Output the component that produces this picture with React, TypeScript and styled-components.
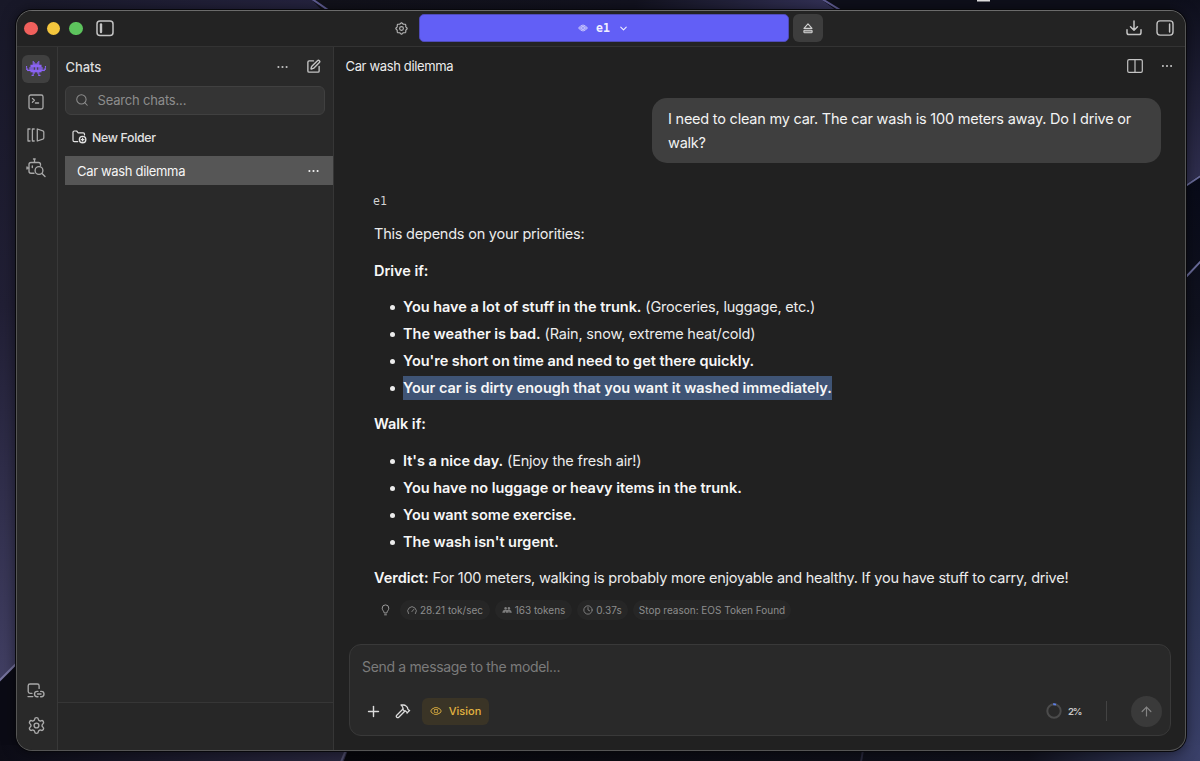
import React from "react";
import styled, { createGlobalStyle, css } from "styled-components";
import { SquarePen, Search, Hammer, Plus, ArrowUp, ChevronDown, Clock, Settings } from "lucide-react";
import { PiEye } from "react-icons/pi";

const Global = createGlobalStyle`
  *, *::before, *::after { box-sizing: border-box; }
  body { margin: 0; background: #0d0d18; overflow: hidden; }
  button { font: inherit; color: inherit; letter-spacing: inherit; border: 0; background: none; padding: 0; }
  svg { display: block; flex: none; }
`;

const Desktop = styled.div`
  position: relative;
  width: 1200px;
  height: 761px;
  padding: 10px 14px 10px 16px;
  overflow: hidden;
  font-family: Inter, "Liberation Sans", sans-serif;
  color: #ececec;
`;

const WallpaperSvg = styled.svg`
  position: absolute;
  inset: 0;
`;

const AppWindow = styled.div`
  position: relative;
  display: flex;
  flex-direction: column;
  width: 1170px;
  height: 741px;
  border: 1px solid #555555;
  border-top-color: #6b6b6b;
  border-radius: 16px;
  overflow: hidden;
  background: #212121;
  box-shadow: 0 0 0 1px #08080c, 0 1px 14px rgba(0, 0, 0, 0.55);
`;

const TitleBar = styled.header`
  display: flex;
  align-items: center;
  flex: none;
  height: 36px;
  padding: 0 11px 1px 7px;
  background: #232323;
  border-bottom: 1px solid #333333;
`;

const Lights = styled.div`
  display: flex;
  gap: 9px;
  margin-top: 1px;
`;

const Light = styled.span<{ $color: string }>`
  width: 13.5px;
  height: 13.5px;
  border-radius: 50%;
  background: ${(p) => p.$color};
`;

const IconButton = styled.button<{ $color?: string }>`
  display: flex;
  align-items: center;
  justify-content: center;
  color: ${(p) => p.$color ?? "#c4c4c4"};
`;

const PanelToggle = styled(IconButton)`
  margin-left: 13.5px;
`;

const TitleCenter = styled.div`
  display: flex;
  align-items: center;
  margin-left: 281px;
`;

const ModelPicker = styled.button`
  display: flex;
  align-items: center;
  justify-content: center;
  width: 370px;
  height: 28px;
  margin: 0 4px 0 10.5px;
  border: 1px solid #4f4bb8;
  border-radius: 5px;
  background: #625ff6;
  color: #f1f0ff;
  font: 700 11.5px "DejaVu Sans Mono", monospace;
  gap: 8px;
`;

const Eject = styled.button`
  display: flex;
  align-items: center;
  justify-content: center;
  width: 30.5px;
  height: 28px;
  border-radius: 6px;
  background: #3d3d3d;
  color: #d0d0d0;
`;

const TitleEnd = styled.div`
  display: flex;
  align-items: center;
  gap: 14.5px;
  margin-left: auto;
`;

const Body = styled.div`
  display: flex;
  flex: 1;
  min-height: 0;
`;

const Rail = styled.nav`
  display: flex;
  flex-direction: column;
  align-items: center;
  flex: none;
  width: 41px;
  padding: 7.5px 2px 15px 0;
  background: #292929;
  border-right: 1px solid #383838;
  color: #a9a9a9;
`;

const RailButton = styled.button<{ $active?: boolean }>`
  display: flex;
  align-items: center;
  justify-content: center;
  width: 28px;
  height: 28px;
  margin-bottom: 5.3px;
  border-radius: 6px;
  ${(p) =>
    p.$active &&
    css`
      background: #404040;
      color: #8a63f4;
    `}
`;

const RailEnd = styled.div`
  display: flex;
  flex-direction: column;
  align-items: center;
  gap: 17.5px;
  margin-top: auto;
`;

const Sidebar = styled.aside`
  display: flex;
  flex-direction: column;
  flex: none;
  width: 276px;
  background: #292929;
  border-right: 1px solid #363636;
`;

const SidebarHeader = styled.div`
  display: flex;
  align-items: center;
  height: 39px;
  padding: 0 12px 0 7.5px;
`;

const SidebarTitle = styled.h2`
  flex: 1;
  margin: 0;
  font-size: 13px;
  font-weight: 500;
  letter-spacing: -0.1px;
  color: #dddddd;
`;

const HeaderTools = styled.div`
  display: flex;
  align-items: center;
  gap: 18px;
`;

const SearchBox = styled.div`
  display: flex;
  align-items: center;
  gap: 9px;
  height: 29px;
  margin: 0 8px 0 7px;
  padding: 0 9px 1px 8.5px;
  border: 1px solid #404040;
  border-radius: 6px;
  background: #343434;
  color: #8d8d8d;
  font-size: 13px;
  letter-spacing: -0.18px;
`;

const NewFolder = styled.button`
  display: flex;
  align-items: center;
  gap: 5px;
  height: 41px;
  padding: 3px 0 0 14px;
  font-size: 12.3px;
  font-weight: 500;
  letter-spacing: -0.3px;
  color: #e2e2e2;
`;

const ChatRow = styled.div`
  display: flex;
  align-items: center;
  justify-content: space-between;
  height: 29px;
  margin-left: 7px;
  padding: 0 14px 0 12px;
  background: #565656;
  color: #f5f5f5;
  font-size: 13px;
  letter-spacing: -0.33px;
`;

const SidebarFooter = styled.div`
  height: 48px;
  margin-top: auto;
  border-top: 1px solid #363636;
  background: #272727;
`;

const Main = styled.main`
  display: flex;
  flex-direction: column;
  flex: 1;
  min-width: 0;
`;

const ChatHeader = styled.div`
  display: flex;
  align-items: center;
  justify-content: space-between;
  height: 38px;
  padding: 0 12px 1px 11.5px;
  font-size: 13px;
  letter-spacing: -0.35px;
`;

const Thread = styled.section`
  display: flex;
  flex-direction: column;
  flex: 1;
  padding: 13px 24px 0 39px;
  font-size: 14.5px;
  line-height: 24px;
`;

const UserBubble = styled.div`
  align-self: flex-end;
  width: 509px;
  height: 65px;
  padding: 8.5px 16px;
  border-radius: 15px;
  background: #3f3f3f;
  color: #f3f3f3;
`;

const ModelName = styled.div`
  margin: 30px 0 13.4px;
  font: 11.5px/16px "DejaVu Sans Mono", monospace;
  color: #d2d2d2;
`;

const Answer = styled.div`
  display: flex;
  flex-direction: column;
  gap: 12.3px;
  padding-left: 1px;
`;

const Line = styled.p`
  margin: 0;
  white-space: nowrap;
  letter-spacing: -0.22px;
`;

const Strong = styled.strong`
  font-weight: 600;
  letter-spacing: -0.03px;
  color: #f7f7f7;
`;

const Bullets = styled.ul`
  display: flex;
  flex-direction: column;
  gap: 3px;
  margin: 0;
  padding: 0;
  list-style: none;
`;

const Bullet = styled.li`
  display: flex;
  align-items: center;
  height: 24px;
  padding-left: 16px;
  white-space: nowrap;
  letter-spacing: -0.19px;

  &::before {
    content: "";
    width: 5px;
    height: 5px;
    margin: 1px 8px 0 0;
    border-radius: 50%;
    background: #ececec;
  }
`;

const Selection = styled.span`
  background: #3f5475;
`;

const Stats = styled.div`
  display: flex;
  align-items: center;
  gap: 5px;
  margin: 10.4px 0 0 8px;
  color: #8d8d8d;
  font-size: 10px;
  line-height: 20px;
`;

const Pill = styled.span<{ $width: number }>`
  display: flex;
  align-items: center;
  justify-content: center;
  gap: 3px;
  width: ${(p) => p.$width}px;
  height: 20px;
  border-radius: 10px;
  background: #262626;
  white-space: nowrap;
`;

const Hint = styled.span`
  margin-right: 5px;
`;

const Composer = styled.form`
  display: flex;
  flex-direction: column;
  justify-content: space-between;
  height: 92px;
  margin: 0 14px 14px 15px;
  padding: 12px 8px 9px 12px;
  border: 1px solid #393939;
  border-radius: 12px;
  background: #292929;
`;

const Placeholder = styled.div`
  font-size: 14px;
  line-height: 20px;
  letter-spacing: -0.33px;
  color: #7b7b7b;
`;

const Tools = styled.div`
  display: flex;
  align-items: center;
  height: 30px;
  padding-left: 3px;
  color: #dcdcdc;
`;

const VisionTag = styled.button`
  display: flex;
  align-items: center;
  justify-content: center;
  gap: 7px;
  width: 67px;
  height: 27px;
  margin-left: 11px;
  border-radius: 6px;
  background: #3a3426;
  color: #e3b341;
  font-size: 11px;
  font-weight: 500;
`;

const ToolsGap = styled.div`
  width: 13px;
`;

const Usage = styled.div`
  display: flex;
  align-items: center;
  gap: 6px;
  margin-left: auto;
  font-size: 9.6px;
  font-weight: 600;
  letter-spacing: -1.3px;
  color: #c9c9c9;
`;

const Divider = styled.span`
  width: 1px;
  height: 20px;
  margin: 0 24px 0 25px;
  background: #434343;
`;

const Send = styled.button`
  display: flex;
  align-items: center;
  justify-content: center;
  width: 31px;
  height: 31px;
  border-radius: 50%;
  background: #3a3a3a;
  color: #858585;
`;

const Wallpaper = () => (
  <WallpaperSvg width="1200" height="761" viewBox="0 0 1200 761">
    <defs>
      <linearGradient id="topLeft" x1="0" x2="1"><stop offset="0" stopColor="#181828" /><stop offset="1" stopColor="#25233f" /></linearGradient>
      <linearGradient id="topMid" x1="0" x2="1"><stop offset="0" stopColor="#11111a" /><stop offset="0.6" stopColor="#12121f" /><stop offset="1" stopColor="#36345c" /></linearGradient>
      <linearGradient id="left" x1="0" x2="0" y1="0" y2="1"><stop offset="0" stopColor="#181828" /><stop offset="0.45" stopColor="#211f35" /><stop offset="1" stopColor="#413f63" /></linearGradient>
      <linearGradient id="rightTop" x1="0" x2="0" y1="0" y2="1"><stop offset="0" stopColor="#0e0f1c" /><stop offset="1" stopColor="#302f50" /></linearGradient>
      <linearGradient id="right" x1="0" x2="0" y1="0" y2="1"><stop offset="0" stopColor="#080a18" /><stop offset="0.25" stopColor="#10121f" /><stop offset="0.6" stopColor="#262e4a" /><stop offset="1" stopColor="#3a4069" /></linearGradient>
      <linearGradient id="bottomLeft" x1="0" x2="1"><stop offset="0" stopColor="#0c0c16" /><stop offset="1" stopColor="#29273f" /></linearGradient>
      <linearGradient id="bottomRight" x1="0" x2="1"><stop offset="0" stopColor="#07070c" /><stop offset="0.8" stopColor="#11121d" /><stop offset="1" stopColor="#3a4069" /></linearGradient>
    </defs>
    <rect width="322" height="20" fill="url(#topLeft)" />
    <path d="M312 0H822L850 20H331Z" fill="url(#topMid)" />
    <path d="M822 0H1200V20H850Z" fill="#0e0f1a" />
    <rect width="30" height="680" fill="url(#left)" />
    <path d="M0 680L30 650V761H0Z" fill="#0b0b15" />
    <rect x="1170" width="30" height="185" fill="url(#rightTop)" />
    <path d="M1170 195L1200 175V761H1170Z" fill="url(#right)" />
    <path d="M0 745H350L344 761H0Z" fill="url(#bottomLeft)" />
    <path d="M350 745H1200V761H344Z" fill="url(#bottomRight)" />
    <g fill="none" stroke="#5f5c93" strokeWidth="2">
      <path d="M312 -1L331 12M822 -1L850 16" />
      <path d="M-1 681L18 662" stroke="#77759f" />
      <path d="M1184 187L1202 175M1184 279L1202 260" stroke="#6a6c9b" />
      <path d="M346 750L341 762" stroke="#4c4b68" />
      <path d="M863 750L861 762" stroke="#27273a" />
    </g>
    <rect x="977" width="13" height="1.5" fill="#e4e4e4" />
  </WallpaperSvg>
);

const Dots = ({ size = 11 }: { size?: number }) => (
  <svg width={size} height="4" viewBox="0 0 11 4" fill="currentColor">
    <circle cx="1.4" cy="2" r="1.05" />
    <circle cx="5.5" cy="2" r="1.05" />
    <circle cx="9.6" cy="2" r="1.05" />
  </svg>
);

const LeftPanelIcon = () => (
  <svg width="18" height="17" viewBox="0 0 18 17" fill="none" stroke="currentColor" strokeWidth="1.5">
    <rect x="1" y="1" width="16" height="14.5" rx="3" />
    <path d="M5 4.5V12" strokeWidth="2.4" strokeLinecap="round" />
  </svg>
);

const RightPanelIcon = () => (
  <svg width="18" height="16" viewBox="0 0 18 16" fill="none" stroke="currentColor" strokeWidth="1.4">
    <rect x="1" y="0.9" width="16" height="14.2" rx="3" />
    <path d="M13.6 4V12" strokeWidth="1.5" strokeLinecap="round" />
  </svg>
);

const DownloadIcon = () => (
  <svg width="16" height="16" viewBox="0 0 16 16" fill="none" stroke="currentColor" strokeWidth="1.5" strokeLinecap="round" strokeLinejoin="round">
    <path d="M8 1V10M4.5 6.8L8 10.3L11.5 6.8M1 9.8V12.5Q1 14.6 3 14.6H13Q15 14.6 15 12.5V9.8" />
  </svg>
);

const cogOutline =
  Array.from({ length: 96 }, (_, i) => {
    const a = (i / 96) * Math.PI * 2;
    const r = 5.15 + 0.5 * Math.cos(8 * a);
    return `${i ? "L" : "M"}${(6.5 + r * Math.cos(a)).toFixed(2)} ${(6.5 + r * Math.sin(a)).toFixed(2)}`;
  }).join("") + "Z";

const CogIcon = () => (
  <svg width="13" height="13" viewBox="0 0 13 13" fill="none" stroke="currentColor" strokeWidth="1.15" strokeLinejoin="round">
    <path d={cogOutline} />
    <circle cx="6.5" cy="6.5" r="1.9" />
  </svg>
);

const invaderRows = [
  "......#....#......",
  "......##..##......",
  "......######......",
  "....##########....",
  "#...##########...#",
  "#..####.##.####..#",
  "##.####.##.####.##",
  ".################.",
  "....##########....",
  "......##..##......",
  "......#....#......",
  ".....##....##.....",
];

const InvaderIcon = () => (
  <svg width="20" height="15" viewBox="0 0 18 12" preserveAspectRatio="none" fill="currentColor">
    {invaderRows.flatMap((row, y) =>
      [...row.matchAll(/#+/g)].map((run) => (
        <rect key={`${run.index}-${y}`} x={run.index} y={y} width={run[0].length} height="1.05" />
      ))
    )}
  </svg>
);

const ConsoleIcon = () => (
  <svg width="16" height="16" viewBox="0 0 16 16" fill="none" stroke="currentColor" strokeWidth="1.3" strokeLinecap="round" strokeLinejoin="round">
    <rect x="1" y="1" width="14" height="14" rx="1.8" />
    <path d="M4.4 4.4L6.4 6.3L4.4 8.2M7.4 9H10.6" />
  </svg>
);

const SplitIcon = () => (
  <svg width="16" height="14" viewBox="0 0 16 14" fill="none" stroke="currentColor" strokeWidth="1.2">
    <rect x="0.7" y="0.7" width="14.6" height="12.6" rx="1.4" />
    <path d="M8 0.7V13.3" />
  </svg>
);

const LibraryIcon = () => (
  <svg width="18" height="14" viewBox="0 0 18 14" fill="none" stroke="currentColor" strokeWidth="1.3" strokeLinejoin="round" strokeLinecap="round">
    <path d="M3 1H1V13H3M7.2 1H5.4V13H7.2M10.3 1L15.8 2.8Q16.8 3.2 16.8 4.2V9.8Q16.8 10.8 15.8 11.2L10.3 13Z" />
  </svg>
);

const BotSearchIcon = () => (
  <svg width="20" height="20" viewBox="0 0 20 20" fill="none" stroke="currentColor" strokeWidth="1.35" strokeLinecap="round" strokeLinejoin="round">
    <path d="M8.5 1V4.5M7.5 1H9.2M8 15.2H5Q3 15.2 3 13.2V6.5Q3 4.5 5 4.5H12.5Q14.5 4.5 14.5 6.5V7.2M1 8.8V11M3 10H1M6.3 7.8V9.6" />
    <circle cx="13" cy="12.5" r="3.9" />
    <path d="M16 15.5L19 18.5" />
  </svg>
);

const DeviceLinkIcon = () => (
  <svg width="18" height="16" viewBox="0 0 18 16" fill="none" stroke="currentColor" strokeWidth="1.35" strokeLinecap="round" strokeLinejoin="round">
    <path d="M5 10.3H3Q1.2 10.3 1.2 8.5V2.8Q1.2 1 3 1H10.3Q12.1 1 12.1 2.8V5.4M1 13.6H5.8" />
    <path d="M11 8.3H10.2A2.7 2.7 0 0 0 10.2 13.7H11M13.6 8.3H14.3A2.7 2.7 0 0 1 14.3 13.7H13.6M10.6 11H14" />
  </svg>
);

const FolderAddIcon = () => (
  <svg width="15" height="14" viewBox="0 0 15 14" fill="none" stroke="currentColor" strokeWidth="1.2" strokeLinecap="round" strokeLinejoin="round">
    <path d="M5.8 11.6H2.3Q1 11.6 1 10.3V2.3Q1 1 2.3 1H4.6L6.2 2.9H11.2Q12.5 2.9 12.5 4.2V5" />
    <circle cx="10.6" cy="9.6" r="3.2" strokeWidth="1.4" />
    <path d="M10.6 8.2V11M9.2 9.6H12" />
  </svg>
);

const ModelEye = () => (
  <svg width="10" height="8" viewBox="0 0 10 8" fill="none" stroke="#cfcdfd" strokeWidth="0.8">
    <path d="M0.5 4Q5 -2 9.5 4Q5 10 0.5 4Z" fill="#8583f8" />
    <ellipse cx="5" cy="4" rx="2" ry="1.6" />
    <path d="M1 4H9" strokeWidth="0.6" />
  </svg>
);

const EjectIcon = () => (
  <svg width="10" height="11" viewBox="0 0 10 11" fill="none" stroke="currentColor" strokeWidth="1.1" strokeLinejoin="round">
    <path d="M5 0.8L9 5.4H1Z" />
    <rect x="0.9" y="7.2" width="8.2" height="2.6" rx="0.8" fill="#888888" />
  </svg>
);

const BulbIcon = () => (
  <svg width="9" height="12" viewBox="0 0 9 12" fill="none" stroke="#9b9b9b" strokeWidth="1" strokeLinecap="round">
    <path d="M3.2 8.6C3.2 7.2 1.2 6.4 1.2 4.2A3.3 3.3 0 0 1 7.8 4.2C7.8 6.4 5.8 7.2 5.8 8.6ZM3.6 10.8H5.4" />
  </svg>
);

const GaugeIcon = () => (
  <svg width="10" height="9" viewBox="0 0 10 9" fill="none" stroke="currentColor" strokeWidth="0.9" strokeLinecap="round">
    <path d="M1.5 7.6A4.3 4.3 0 1 1 8.5 7.6M4.9 5.6L6.8 3.4" />
  </svg>
);

const TokensIcon = () => (
  <svg width="10" height="8" viewBox="0 0 10 8" fill="currentColor" opacity="0.85">
    <circle cx="3.6" cy="2.4" r="1.3" />
    <circle cx="6.9" cy="2.4" r="1.3" />
    <path d="M0.3 6.8Q0.6 4 2 4H8Q9.4 4 9.8 6.8H7.3V5.4H6.6V6.8H4V5.4H3.3V6.8Z" />
  </svg>
);

const UsageRing = () => (
  <svg width="16" height="16" viewBox="0 0 16 16" fill="none" strokeWidth="2">
    <circle cx="8" cy="8" r="6.7" stroke="#4b4b4b" />
    <path d="M7.2 1.35A6.7 6.7 0 0 1 10 1.6" stroke="#5c7fe6" />
  </svg>
);

export default function App() {
  return (
    <Desktop>
      <Global />
      <Wallpaper />
      <AppWindow>
        <TitleBar>
          <Lights>
            <Light $color="#f0605c" />
            <Light $color="#f4c63d" />
            <Light $color="#5dc45d" />
          </Lights>
          <PanelToggle><LeftPanelIcon /></PanelToggle>
          <TitleCenter>
            <IconButton $color="#b4b4b4"><CogIcon /></IconButton>
            <ModelPicker>
              <ModelEye />
              <span>e1</span>
              <ChevronDown size={11} strokeWidth={2.4} />
            </ModelPicker>
            <Eject><EjectIcon /></Eject>
          </TitleCenter>
          <TitleEnd>
            <IconButton><DownloadIcon /></IconButton>
            <IconButton><RightPanelIcon /></IconButton>
          </TitleEnd>
        </TitleBar>
        <Body>
          <Rail>
            <RailButton $active><InvaderIcon /></RailButton>
            <RailButton><ConsoleIcon /></RailButton>
            <RailButton><LibraryIcon /></RailButton>
            <RailButton><BotSearchIcon /></RailButton>
            <RailEnd>
              <DeviceLinkIcon />
              <Settings size={19} strokeWidth={1.8} />
            </RailEnd>
          </Rail>
          <Sidebar>
            <SidebarHeader>
              <SidebarTitle>Chats</SidebarTitle>
              <HeaderTools>
                <IconButton><Dots /></IconButton>
                <IconButton><SquarePen size={15} strokeWidth={2.2} /></IconButton>
              </HeaderTools>
            </SidebarHeader>
            <SearchBox>
              <Search size={14} strokeWidth={1.8} />
              <span>Search chats...</span>
            </SearchBox>
            <NewFolder>
              <FolderAddIcon />
              <span>New Folder</span>
            </NewFolder>
            <ChatRow>
              <span>Car wash dilemma</span>
              <Dots />
            </ChatRow>
            <SidebarFooter />
          </Sidebar>
          <Main>
            <ChatHeader>
              <span>Car wash dilemma</span>
              <HeaderTools>
                <IconButton><SplitIcon /></IconButton>
                <IconButton><Dots size={12} /></IconButton>
              </HeaderTools>
            </ChatHeader>
            <Thread>
              <UserBubble>
                <Line>I need to clean my car. The car wash is 100 meters away. Do I drive or<br />walk?</Line>
              </UserBubble>
              <ModelName>e1</ModelName>
              <Answer>
                <Line>This depends on your priorities:</Line>
                <Line><Strong>Drive if:</Strong></Line>
                <Bullets>
                  <Bullet><span><Strong>You have a lot of stuff in the trunk.</Strong> (Groceries, luggage, etc.)</span></Bullet>
                  <Bullet><span><Strong>The weather is bad.</Strong> (Rain, snow, extreme heat/cold)</span></Bullet>
                  <Bullet><Strong>You're short on time and need to get there quickly.</Strong></Bullet>
                  <Bullet><Selection><Strong>Your car is dirty enough that you want it washed immediately.</Strong></Selection></Bullet>
                </Bullets>
                <Line><Strong>Walk if:</Strong></Line>
                <Bullets>
                  <Bullet><span><Strong>It's a nice day.</Strong> (Enjoy the fresh air!)</span></Bullet>
                  <Bullet><Strong>You have no luggage or heavy items in the trunk.</Strong></Bullet>
                  <Bullet><Strong>You want some exercise.</Strong></Bullet>
                  <Bullet><Strong>The wash isn't urgent.</Strong></Bullet>
                </Bullets>
                <Line><Strong>Verdict:</Strong> For 100 meters, walking is probably more enjoyable and healthy. If you have stuff to carry, drive!</Line>
              </Answer>
              <Stats>
                <Hint><BulbIcon /></Hint>
                <Pill $width={90}><GaugeIcon />28.21 tok/sec</Pill>
                <Pill $width={77}><TokensIcon />163 tokens</Pill>
                <Pill $width={51}><Clock size={10} strokeWidth={2} />0.37s</Pill>
                <Pill $width={158}>Stop reason: EOS Token Found</Pill>
              </Stats>
            </Thread>
            <Composer>
              <Placeholder>Send a message to the model...</Placeholder>
              <Tools>
                <Plus size={17} strokeWidth={2} />
                <ToolsGap />
                <Hammer size={16} strokeWidth={1.9} />
                <VisionTag><PiEye size={12} />Vision</VisionTag>
                <Usage><UsageRing />2%</Usage>
                <Divider />
                <Send><ArrowUp size={15} strokeWidth={1.9} /></Send>
              </Tools>
            </Composer>
          </Main>
        </Body>
      </AppWindow>
    </Desktop>
  );
}
